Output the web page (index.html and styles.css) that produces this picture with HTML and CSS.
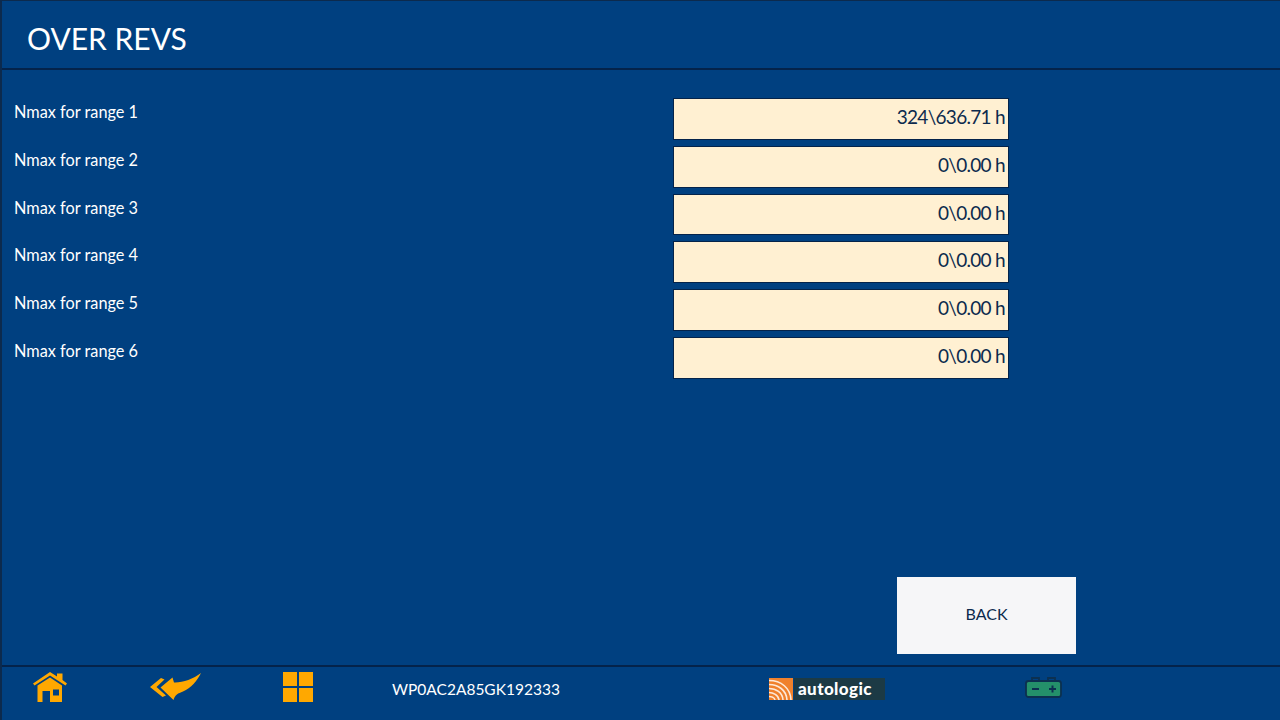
FILE: index.html
```html
<!DOCTYPE html>
<html lang="en">
<head>
<meta charset="UTF-8" />
<title>Over Revs</title>
<link rel="stylesheet" href="styles.css">
</head>
<body>

<div class="screen">
  <header class="top-bar">
    <h1>OVER REVS</h1>
  </header>

  <main class="content">
    <div class="rows">
      <div class="row"><span class="row-label">Nmax for range 1</span><div class="value">324\636.71 h</div></div>
      <div class="row"><span class="row-label">Nmax for range 2</span><div class="value">0\0.00 h</div></div>
      <div class="row"><span class="row-label">Nmax for range 3</span><div class="value">0\0.00 h</div></div>
      <div class="row"><span class="row-label">Nmax for range 4</span><div class="value">0\0.00 h</div></div>
      <div class="row"><span class="row-label">Nmax for range 5</span><div class="value">0\0.00 h</div></div>
      <div class="row"><span class="row-label">Nmax for range 6</span><div class="value">0\0.00 h</div></div>
    </div>
    <div class="actions">
      <button class="back-btn" type="button">BACK</button>
    </div>
  </main>

  <footer class="bottom-bar">
    <svg class="icon" width="34" height="32" viewBox="0 0 34 32">
      <path fill="#ffa800" d="M17 1 L24 5.500 V2.500 H29.500 V9 L34 12.500 L32.500 14.500 L17 4.500 L1.500 14.500 L0 12.500 Z"/>
      <path fill="#ffa800" fill-rule="evenodd" d="M17 6.500 L29 14.500 V31 H17 V20 H9.500 V31 H4.500 V14.500 Z M20 18.500 V24.500 H26 V18.500 Z"/>
    </svg>
    <svg class="icon" width="52" height="28" viewBox="0 0 52 28">
      <path fill="#ffa800" d="M0 14 L11 5 L14.500 6.500 L6.500 14 L16 22.500 L12.500 24 Z"/>
      <path fill="#ffa800" d="M51 0 C47 8 41 15 33 18.500 C28 20.500 25 21.500 23.500 27 L10.500 14.500 L22.500 4.500 L24 9.500 C32 10 43 6 51 0 Z"/>
    </svg>
    <div class="tiles">
      <span></span><span></span><span></span><span></span>
    </div>
    <span class="vin">WP0AC2A85GK192333</span>
    <div class="logo">
      <svg width="24" height="22" viewBox="0 0 24 22">
        <rect width="24" height="22" fill="#f0812c"/>
        <g fill="none" stroke="#fde9d8" stroke-width="1.600">
          <path d="M0 2.500 C12 2.500 21.500 10 22 22"/>
          <path d="M0 6.500 C9 6.500 17.500 12 18 22"/>
          <path d="M0 10.500 C7 10.500 13.500 14.500 14 22"/>
          <path d="M0 14.500 C4 14.500 9.500 17 10 22"/>
          <path d="M0 18.500 C2 18.500 5.500 19.500 6 22"/>
        </g>
      </svg>
      <span class="logo-text">autologic</span>
    </div>
    <svg class="battery" width="37" height="21" viewBox="0 0 37 21">
      <path fill="none" stroke="#0c3050" stroke-width="1.800" d="M7 5 V1 H14 V5 M23 5 V1 H30 V5"/>
      <rect x="1" y="4" width="35" height="16" rx="2.500" fill="#24906a" stroke="#0c3050" stroke-width="1.800"/>
      <path fill="none" stroke="#0c3050" stroke-width="2" d="M7 12 H14 M24 12 H31 M27.500 8.500 V15.500"/>
    </svg>
  </footer>
</div>

</body>
</html>
```

FILE: styles.css
```css
html, body {
  margin: 0;
  padding: 0;
}
body {
  background: #004080;
  font-family: Lato, "Open Sans", sans-serif;
  color: #fff;
}
.screen {
  width: 1280px;
  height: 720px;
  box-sizing: border-box;
  display: flex;
  flex-direction: column;
  background: #004080;
  border-left: 2px solid #0c2a4d;
  border-top: 1px solid #0c2a4d;
}
.top-bar {
  height: 69px;
  flex: none;
  box-sizing: border-box;
  border-bottom: 2px solid #04234a;
  display: flex;
  align-items: center;
  padding: 7px 0 0 25px;
}
.top-bar h1 {
  margin: 0;
  font-size: 30px;
  font-weight: 400;
}
.content {
  flex: 1;
  display: flex;
  flex-direction: column;
  justify-content: space-between;
  padding: 28px 0 11px 12px;
}
.rows {
  display: flex;
  flex-direction: column;
  gap: 6px;
}
.row {
  display: flex;
  justify-content: space-between;
  width: 995px;
}
.row-label {
  font-size: 16.300px;
  line-height: 27px;
}
.value {
  width: 336px;
  height: 41.800px;
  box-sizing: border-box;
  background: #fff0d2;
  border: 1px solid #04234a;
  color: #0c2a4d;
  font-size: 19px;
  letter-spacing: -0.700px;
  line-height: 36px;
  text-align: right;
  padding-right: 3px;
}
.actions {
  display: flex;
  justify-content: flex-end;
  padding-right: 204px;
}
.back-btn {
  width: 179px;
  height: 77px;
  background: #f6f6f8;
  border: none;
  color: #0c2a4d;
  font-family: inherit;
  font-size: 16px;
  padding: 0 0 5px 0;
}
.bottom-bar {
  flex: none;
  height: 55px;
  box-sizing: border-box;
  border-top: 2px solid #04234a;
  display: grid;
  grid-template-columns: 117px 133px 109px 377px 256px auto;
  align-items: center;
  justify-content: start;
  padding: 0 0 10px 31px;
}
.icon {
  display: block;
  margin-bottom: 4px;
}
.battery {
  display: block;
  margin-bottom: 2px;
}
.tiles {
  display: grid;
  grid-template-columns: 14px 14px;
  grid-template-rows: 14px 14px;
  gap: 2px;
  width: 30px;
  margin-bottom: 4px;
}
.tiles span {
  background: #ffa800;
}
.vin {
  font-size: 15.500px;
}
.logo {
  display: flex;
  align-items: stretch;
  width: 116px;
  height: 22px;
}
.logo-text {
  flex: 1;
  margin-left: 1px;
  background: #1c3a45;
  font-size: 17px;
  font-weight: 900;
  line-height: 21px;
  padding-left: 4px;
  letter-spacing: 0.400px;
}
```
